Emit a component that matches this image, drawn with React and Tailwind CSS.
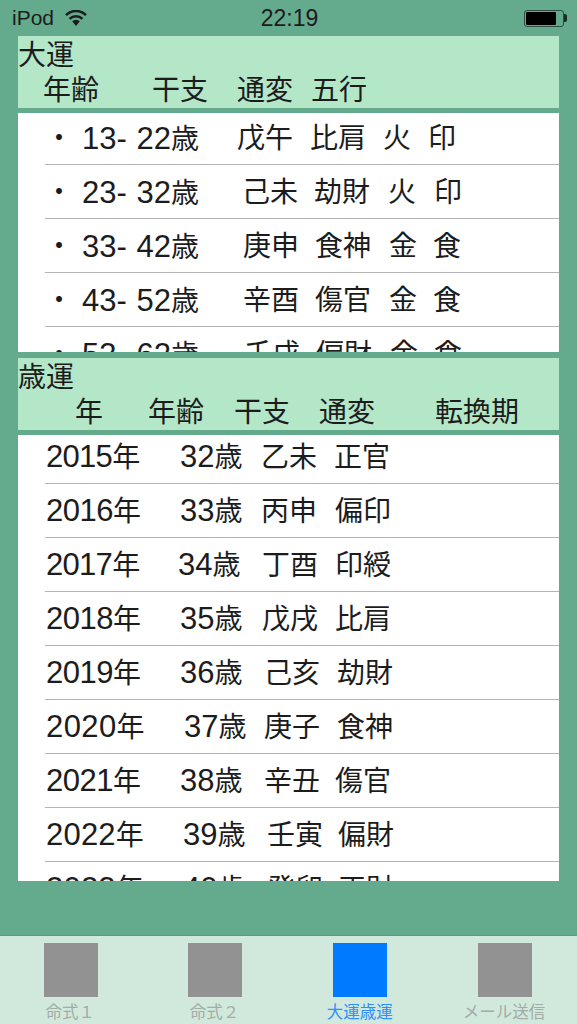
import React from 'react';

const FONT = "font-['Liberation_Sans','Noto_Sans_CJK_JP',sans-serif]";

const LUCK_ROWS = [
  { age: '13- 22', ageClass: 'w-[155px]', stem: '戊午', stemClass: 'w-[73px]', star: '比肩', starClass: 'w-[73px]', el: '火', elClass: 'w-[45px]', last: '印' },
  { age: '23- 32', ageClass: 'w-[160px]', stem: '己未', stemClass: 'w-[72px]', star: '劫財', starClass: 'w-[74px]', el: '火', elClass: 'w-[46px]', last: '印' },
  { age: '33- 42', ageClass: 'w-[161px]', stem: '庚申', stemClass: 'w-[72px]', star: '食神', starClass: 'w-[74px]', el: '金', elClass: 'w-[44px]', last: '食' },
  { age: '43- 52', ageClass: 'w-[161px]', stem: '辛酉', stemClass: 'w-[72px]', star: '傷官', starClass: 'w-[74px]', el: '金', elClass: 'w-[44px]', last: '食' },
  { age: '53- 62', ageClass: 'w-[162px]', stem: '壬戌', stemClass: 'w-[72px]', star: '偏財', starClass: 'w-[74px]', el: '金', elClass: 'w-[44px]', last: '食' },
];

// the reference font has a narrow "1", so years holding one run a little tighter
const YEAR_ROWS = [
  { year: '2015', numClass: 'tracking-[-0.7px]', ageClass: 'w-[134px]', age: '32', stemClass: 'w-[81px]', stem: '乙未', starClass: 'w-[73px]', star: '正官' },
  { year: '2016', numClass: 'tracking-[-0.5px]', ageClass: 'w-[134px]', age: '33', stemClass: 'w-[81px]', stem: '丙申', starClass: 'w-[74px]', star: '偏印' },
  { year: '2017', numClass: 'tracking-[-0.7px]', ageClass: 'w-[132px]', age: '34', stemClass: 'w-[84px]', stem: '丁酉', starClass: 'w-[73px]', star: '印綬' },
  { year: '2018', numClass: 'tracking-[-0.5px]', ageClass: 'w-[134px]', age: '35', stemClass: 'w-[82px]', stem: '戊戌', starClass: 'w-[73px]', star: '比肩' },
  { year: '2019', numClass: 'tracking-[-0.5px]', ageClass: 'w-[134px]', age: '36', stemClass: 'w-[84px]', stem: '己亥', starClass: 'w-[73px]', star: '劫財' },
  { year: '2020', numClass: 'tracking-[0.4px]', ageClass: 'w-[138px]', age: '37', stemClass: 'w-[80px]', stem: '庚子', starClass: 'w-[73px]', star: '食神' },
  { year: '2021', numClass: 'tracking-[-0.5px]', ageClass: 'w-[134px]', age: '38', stemClass: 'w-[84px]', stem: '辛丑', starClass: 'w-[71px]', star: '傷官' },
  { year: '2022', numClass: 'tracking-[0.2px]', ageClass: 'w-[137px]', age: '39', stemClass: 'w-[84px]', stem: '壬寅', starClass: 'w-[71px]', star: '偏財' },
  { year: '2023', numClass: 'tracking-[0.2px]', ageClass: 'w-[137px]', age: '40', stemClass: 'w-[84px]', stem: '癸卯', starClass: 'w-[71px]', star: '正財' },
];

// first three tabs sit a pixel left of their grid cell in the reference
const TABS = [
  { label: '命式１', active: false, tabClass: 'pr-[2px]', labelClass: 'pr-[2px] text-[#a3aca7]' },
  { label: '命式２', active: false, tabClass: 'pr-[2px]', labelClass: 'pr-[2px] text-[#a3aca7]' },
  { label: '大運歳運', active: true, tabClass: 'pr-[2px]', labelClass: 'text-[#2f8fff]' },
  { label: 'メール送信', active: false, tabClass: '', labelClass: 'pr-[2px] text-[#a3aca7]' },
];

function SectionHeader({ title, children }) {
  return (
    <div className="mx-[18px] h-[72px] bg-[#b4e6c8] pt-[2px] text-[28px] leading-[36px] text-[#1c1c1c]">
      <div className="h-[35px]">{title}</div>
      <div className="flex h-[35px]">{children}</div>
    </div>
  );
}

function Cell({ className, children }) {
  return <span className={`shrink-0 whitespace-nowrap ${className}`}>{children}</span>;
}

function Num({ className = '', children }) {
  return <span className={`text-[31px] [word-spacing:1px] ${className}`}>{children}</span>;
}

function LuckRow({ row }) {
  return (
    <div className="ml-[27px] flex h-[54px] items-center border-b border-[#b3b3b3] pt-[3px]">
      <Cell className="w-[37px]">・</Cell>
      <Cell className={row.ageClass}>
        <Num>{row.age}</Num>歳
      </Cell>
      <Cell className={row.stemClass}>{row.stem}</Cell>
      <Cell className={row.starClass}>{row.star}</Cell>
      <Cell className={row.elClass}>{row.el}</Cell>
      <Cell className="">{row.last}</Cell>
    </div>
  );
}

function YearRow({ row }) {
  return (
    <div className="ml-[27px] flex h-[54px] items-center border-b border-[#b3b3b3] pl-[1px] pt-[2px]">
      <Cell className={row.ageClass}>
        <Num className={row.numClass}>{row.year}</Num>年
      </Cell>
      <Cell className={row.stemClass}>
        <Num>{row.age}</Num>歳
      </Cell>
      <Cell className={row.starClass}>{row.stem}</Cell>
      <Cell className="">{row.star}</Cell>
    </div>
  );
}

function WifiGlyph() {
  return (
    <svg width="22" height="16" viewBox="0 0 22 16" fill="none" stroke="#1c1c1c" strokeWidth="2.6">
      <path d="M1 5.2a14 14 0 0 1 20 0" />
      <path d="M4.6 8.9a9 9 0 0 1 12.8 0" />
      <path d="M7.2 11.2L11 16l3.8-4.8a5.4 5.4 0 0 0-7.6 0z" fill="#1c1c1c" stroke="none" />
    </svg>
  );
}

function Battery() {
  return (
    <div className="flex items-center">
      <div className="flex h-[17px] w-[40px] items-center rounded-[3px] border border-[#2c4f40] p-[1px]">
        <div className="h-full w-[30px] rounded-[1px] bg-black" />
      </div>
      <div className="h-[8px] w-[3px] rounded-r-[2px] bg-[#1c2b25]" />
    </div>
  );
}

export default function App() {
  return (
    <div className={`flex h-[1024px] w-[577px] flex-col overflow-hidden bg-[#64ab8d] ${FONT}`}>
      <div className="flex h-[36px] items-center justify-between pl-[12px] pr-[10px] text-[#1c1c1c]">
        <div className="flex w-[200px] items-center gap-[11px] text-[21px]">
          <span>iPod</span>
          <WifiGlyph />
        </div>
        <span className="text-[23px] font-medium">22:19</span>
        <div className="flex w-[200px] justify-end">
          <Battery />
        </div>
      </div>

      <SectionHeader title="大運">
        <Cell className="w-[134px] pl-[25px]">年齢</Cell>
        <Cell className="w-[85px]">干支</Cell>
        <Cell className="w-[74px]">通変</Cell>
        <Cell className="">五行</Cell>
      </SectionHeader>
      <div className="mx-[18px] mt-[5px] h-[239px] overflow-hidden bg-white text-[28px] text-[#1c1c1c]">
        <div className="-mt-[2px]">
          {LUCK_ROWS.map((row) => (
            <LuckRow key={row.age} row={row} />
          ))}
        </div>
      </div>

      <div className="mt-[6px]">
        <SectionHeader title="歳運">
          <Cell className="w-[130px] pl-[57px]">年</Cell>
          <Cell className="w-[86px]">年齢</Cell>
          <Cell className="w-[85px]">干支</Cell>
          <Cell className="w-[116px]">通変</Cell>
          <Cell className="">転換期</Cell>
        </SectionHeader>
      </div>
      <div className="mx-[18px] mt-[5px] h-[446px] overflow-hidden bg-white text-[28px] text-[#1c1c1c]">
        <div className="-mt-[5px]">
          {YEAR_ROWS.map((row) => (
            <YearRow key={row.year} row={row} />
          ))}
        </div>
      </div>

      <div className="mt-auto grid h-[89px] grid-cols-4 border-t border-[#5c9a80] bg-[#d1e9dd]">
        {TABS.map((tab) => (
          <div key={tab.label} className={`flex flex-col items-center pt-[7px] ${tab.tabClass}`}>
            <div className={`size-[54px] ${tab.active ? 'bg-[#007aff]' : 'bg-[#929292]'}`} />
            <span className={`mt-[4px] text-[16.5px] leading-[22px] ${tab.labelClass}`}>{tab.label}</span>
          </div>
        ))}
      </div>
    </div>
  );
}
